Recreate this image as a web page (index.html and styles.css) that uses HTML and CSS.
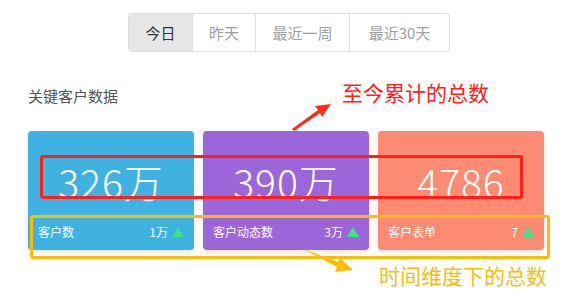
FILE: index.html
```html
<!DOCTYPE html>
<html lang="zh">
  <head>
    <meta charset="UTF-8" />
    <meta name="viewport" content="width=device-width, initial-scale=1.0" />
    <title>关键客户数据</title>
    <link rel="stylesheet" href="styles.css">
  </head>
  <body>
    <div class="page">
      <div class="tabs">
        <span class="tab active">今日</span>
        <span class="tab">昨天</span>
        <span class="tab">最近一周</span>
        <span class="tab">最近30天</span>
      </div>

      <h2 class="title">关键客户数据</h2>

      <div class="cards">
        <div class="card blue">
          <div class="total">326万</div>
          <div class="foot">
            <span>客户数</span>
            <span class="delta">1万 <i class="up"></i></span>
          </div>
        </div>
        <div class="card purple">
          <div class="total">390万</div>
          <div class="foot">
            <span>客户动态数</span>
            <span class="delta">3万 <i class="up"></i></span>
          </div>
        </div>
        <div class="card salmon">
          <div class="total">4786</div>
          <div class="foot">
            <span>客户表单</span>
            <span class="delta">7 <i class="up"></i></span>
          </div>
        </div>
      </div>

      <!-- annotations -->
      <div class="mark red-box"></div>
      <div class="mark yellow-box"></div>
      <div class="note red-note">至今累计的总数</div>
      <div class="note yellow-note">时间维度下的总数</div>
      <svg class="arrow" width="572" height="295" viewBox="0 0 572 295">
        <path d="M292 129 L318 110 L315 106 L331 104 L322 117 L320 113 L294 131 Z" fill="#ff2a1a" />
        <path d="M303 249 L338 262 L340 258 L353 270 L335 272 L337 267 Z" fill="#fbbd08" />
      </svg>
    </div>
  </body>
</html>
```

FILE: styles.css
```css
body {
  margin: 0;
  font-family: "Noto Sans CJK SC", "Noto Sans", sans-serif;
  background: #fff;
}

.page {
  position: relative;
  width: 572px;
  height: 295px;
  padding: 13px 28px 0;
  box-sizing: border-box;
}

.tabs {
  display: flex;
  width: 320px;
  margin-left: 100px;
  border: 1px solid #ddd;
  border-radius: 4px;
  overflow: hidden;
}
.tab {
  height: 37px;
  line-height: 37px;
  text-align: center;
  font-size: 15px;
  color: #a0a0a0;
  border-left: 1px solid #ddd;
}
.tab:first-child {
  border-left: none;
  width: 63px;
}
.tab:nth-child(2) { width: 62px; }
.tab:nth-child(3) { width: 93px; }
.tab:nth-child(4) { flex: 1; }
.tab.active {
  background: #e6e6e6;
  color: #333;
}

.title {
  margin: 33px 0 0;
  font-size: 15px;
  font-weight: normal;
  color: #555;
  line-height: 22px;
}

.cards {
  display: flex;
  gap: 9px;
  margin-top: 24px;
}
.card {
  width: 166px;
  height: 119px;
  border-radius: 4px;
  color: #fff;
  box-shadow: 0 2px 5px rgba(0, 0, 0, 0.12);
  display: flex;
  flex-direction: column;
}
.blue { background: #40b2e2; }
.purple { background: #9d65da; }
.salmon { background: #fb8b73; }

.total {
  text-align: center;
  font-size: 39px;
  font-weight: 300;
  line-height: 40px;
  margin-top: 30px;
  letter-spacing: 1px;
}
.foot {
  display: flex;
  justify-content: space-between;
  align-items: center;
  margin-top: auto;
  padding: 0 10px 10px;
  font-size: 12px;
  line-height: 16px;
}
.delta {
  display: flex;
  align-items: center;
  gap: 4px;
}
.up {
  width: 0;
  height: 0;
  border-left: 6px solid transparent;
  border-right: 6px solid transparent;
  border-bottom: 10px solid #3ee08a;
}

.mark {
  position: absolute;
  border-radius: 3px;
  box-sizing: border-box;
}
.red-box {
  left: 40px;
  top: 155px;
  width: 483px;
  height: 44px;
  border: 3px solid #ff2018;
}
.yellow-box {
  left: 30px;
  top: 215px;
  width: 520px;
  height: 44px;
  border: 3px solid #fbbd08;
}
.note {
  position: absolute;
  font-size: 21px;
  line-height: 24px;
}
.red-note {
  left: 342px;
  top: 80px;
  color: #ff2018;
}
.yellow-note {
  left: 379px;
  top: 263px;
  color: #fbbd08;
}
.arrow {
  position: absolute;
  left: 0;
  top: 0;
}
```
